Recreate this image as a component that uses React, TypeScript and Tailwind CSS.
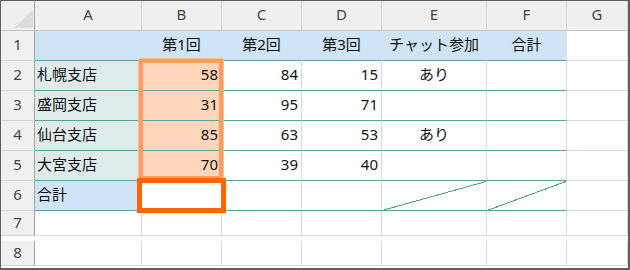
import React from 'react'

const COLS = ['A', 'B', 'C', 'D', 'E', 'F', 'G']

type Cell = { v?: string; align?: 'left' | 'right' | 'center'; bg?: string; diag?: number }

const BLUE = 'bg-[#cfe4f5]'
const TEAL_BG = 'bg-[#dfeaea]'
const ORANGE = 'bg-[#fdd6ba]'

const ROWS: Cell[][] = [
  [
    { bg: BLUE },
    { v: '第1回', align: 'center', bg: BLUE },
    { v: '第2回', align: 'center', bg: BLUE },
    { v: '第3回', align: 'center', bg: BLUE },
    { v: 'チャット参加', align: 'center', bg: BLUE },
    { v: '合計', align: 'center', bg: BLUE },
  ],
  [
    { v: '札幌支店', bg: TEAL_BG },
    { v: '58', align: 'right', bg: ORANGE },
    { v: '84', align: 'right' },
    { v: '15', align: 'right' },
    { v: 'あり', align: 'center' },
    {},
  ],
  [
    { v: '盛岡支店', bg: TEAL_BG },
    { v: '31', align: 'right', bg: ORANGE },
    { v: '95', align: 'right' },
    { v: '71', align: 'right' },
    {},
    {},
  ],
  [
    { v: '仙台支店', bg: TEAL_BG },
    { v: '85', align: 'right', bg: ORANGE },
    { v: '63', align: 'right' },
    { v: '53', align: 'right' },
    { v: 'あり', align: 'center' },
    {},
  ],
  [
    { v: '大宮支店', bg: TEAL_BG },
    { v: '70', align: 'right', bg: ORANGE },
    { v: '39', align: 'right' },
    { v: '40', align: 'right' },
    {},
    {},
  ],
  // diag = inner width of the cell, so the line is drawn pixel for pixel
  [{ v: '合計', bg: BLUE }, {}, {}, {}, { diag: 104 }, { diag: 79 }],
]

function DataCell({ cell }: { cell: Cell }) {
  const justify =
    cell.align === 'right' ? 'justify-end pr-[3px]' : cell.align === 'center' ? 'justify-center' : 'justify-start pl-[2px]'
  const bg = cell.bg ?? 'bg-white'
  const rightBorder = cell.bg === BLUE ? 'border-r-[#cfe4f5]' : 'border-r-[#dadada]'
  return (
    <div className={`relative flex items-center pb-[3px] border-r border-b border-b-[#5ba39a] ${rightBorder} ${bg} ${justify}`}>
      {cell.v}
      {cell.diag && (
        <svg className="absolute left-0 top-0" width={cell.diag} height={30} viewBox={`0 0 ${cell.diag} 30`}>
          <line x1="0" y1="29.5" x2={cell.diag} y2="0.5" stroke="#4f9c92" strokeWidth="1" shapeRendering="crispEdges" />
        </svg>
      )}
    </div>
  )
}

function RowHead({ n }: { n: number }) {
  return (
    <div className="flex items-center justify-center pb-[2px] bg-[#f0f0f0] text-[#444] border-r border-r-[#a3a3a3] border-b border-b-[#d5d5d5]">
      {n}
    </div>
  )
}

export default function App() {
  return (
    <div
      className="w-[630px] h-[270px] overflow-hidden bg-white border-t border-l border-r-2 border-b-2 border-[#5f5f5f] text-[15px] text-[#111]"
      style={{ fontFamily: '"Noto Sans", "Noto Sans CJK JP", sans-serif' }}
    >
      <div className="relative grid grid-cols-[34px_107px_80px_80px_80px_105px_80px_61px] auto-rows-[30px] leading-none">
        {/* header row */}
        <div className="relative bg-[#efefef] border-r border-r-[#a3a3a3] border-b border-b-[#c4c4c4]">
          <svg className="absolute left-[13px] top-[9px]" width="19" height="18" viewBox="0 0 19 18">
            <polygon points="19,0 19,18 0,18" fill="#dcdcdc" />
          </svg>
        </div>
        {COLS.map((c) => (
          <div
            key={c}
            className="flex items-center justify-center pb-[2px] bg-[#efefef] text-[#444] border-r border-r-[#d5d5d5] border-b border-b-[#c4c4c4]"
          >
            {c}
          </div>
        ))}

        {ROWS.map((row, i) => (
          <React.Fragment key={i}>
            <RowHead n={i + 1} />
            {row.map((cell, j) => (
              <DataCell key={j} cell={cell} />
            ))}
            <div className="bg-white border-r border-b border-[#dadada]" />
          </React.Fragment>
        ))}

        {[7, 8, 9].map((n) => (
          <React.Fragment key={n}>
            <div className="h-[25px] flex items-center justify-center pb-[2px] bg-[#f0f0f0] text-[#444] border-r border-r-[#a3a3a3] border-b border-b-[#d5d5d5]">
              {n}
            </div>
            {COLS.map((c) => (
              <div key={c} className="h-[25px] bg-white border-r border-b border-[#dadada]" />
            ))}
          </React.Fragment>
        ))}

        {/* selection B2:B5 */}
        <div className="absolute left-[138px] top-[58px] w-[84px] h-[121px] border-4 border-[#fb9d63] shadow-[0_0_0_1px_#fcc09a] pointer-events-none" />
        {/* active cell B6 */}
        <div className="absolute left-[136px] top-[177px] w-[89px] h-[35px] border-[5px] border-[#ff6600] pointer-events-none" />
      </div>
    </div>
  )
}
